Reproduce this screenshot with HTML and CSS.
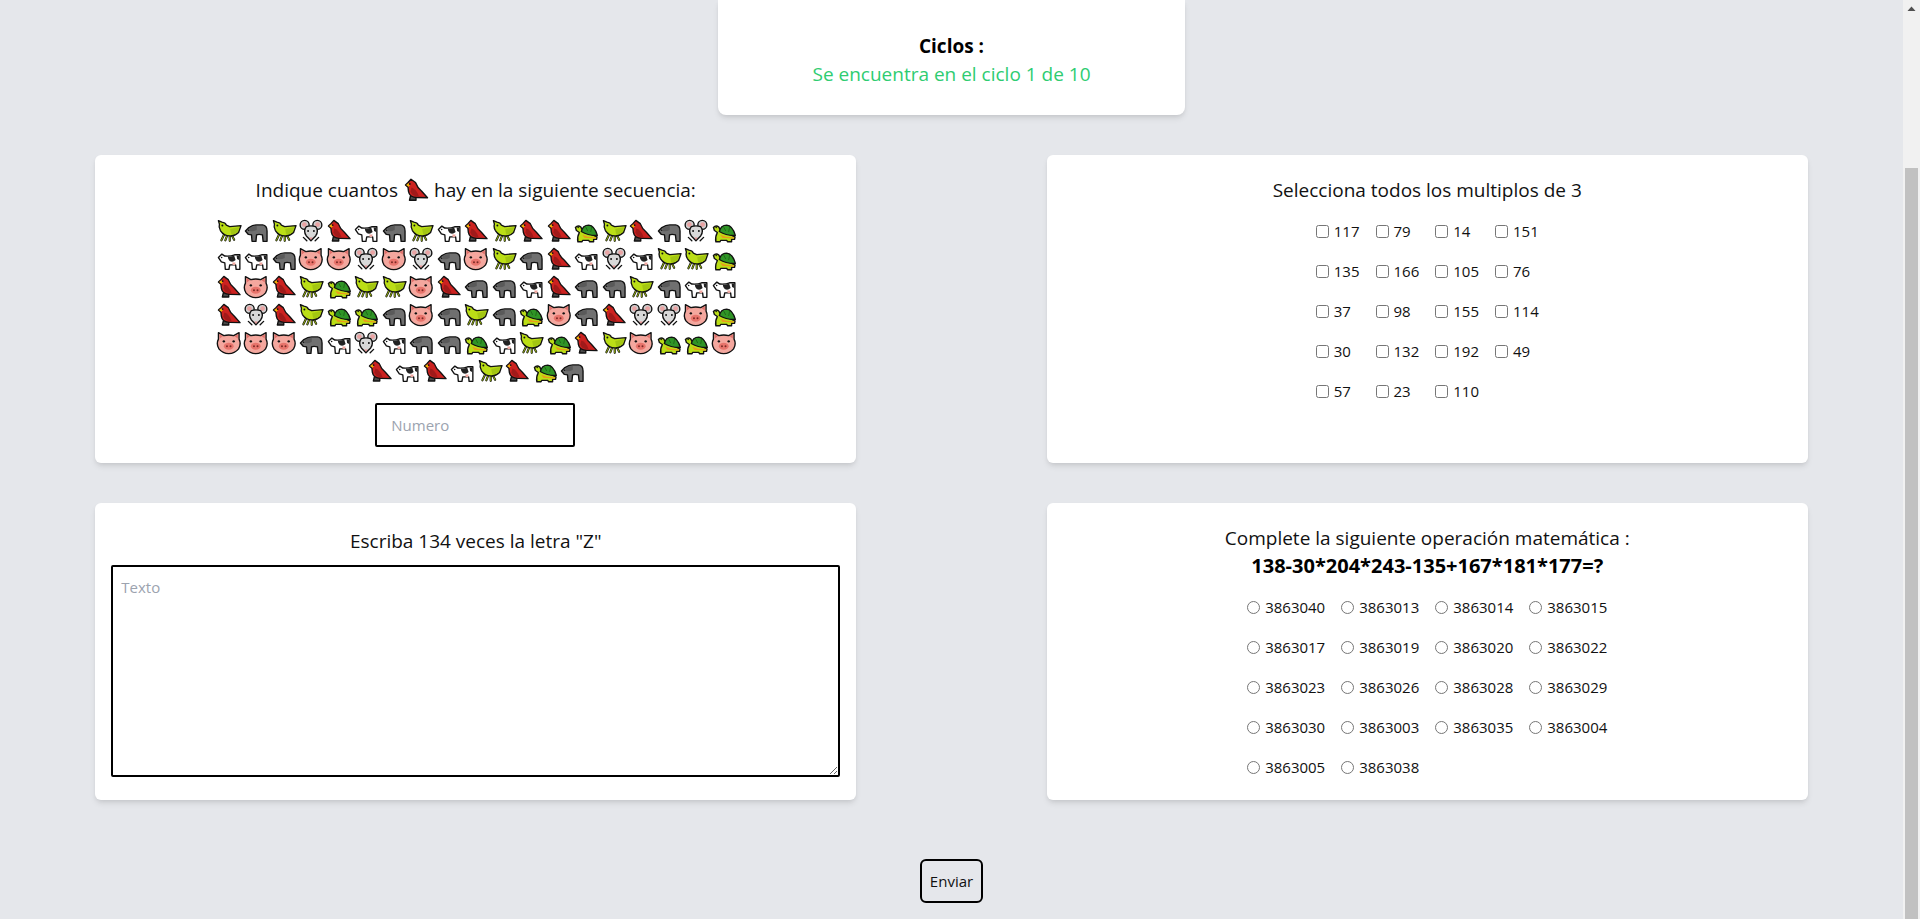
FILE: index.html
```html
<!DOCTYPE html>
<html lang="es">
<head>
<meta charset="utf-8">
<title>Ciclos</title>
<link rel="stylesheet" href="styles.css">
</head>
<body>
<svg class="defs" xmlns="http://www.w3.org/2000/svg">
  <symbol id="g" viewBox="0 0 28 28">
    <path class="leg" d="M10 16L6.500 23.500M13 17L10.500 23.500M15 17L15 24M16.500 17L19.500 23"/>
    <path class="leg-in" d="M10 16L6.500 23.500M13 17L10.500 23.500M15 17L15 24M16.500 17L19.500 23"/>
    <path class="ln" fill="#bbde16" d="M3.500 3.500L7 5Q10.500 5.500 11.500 8L15 9.500L26.500 8.500L24 15.500Q20 19.500 15 19Q9 19 5.500 13.500Q3.500 10 4.500 7Z"/>
    <path fill="#a3c612" d="M15.500 12L25 10L23 15Q19.500 18 16.500 17.500Z"/>
    <circle cx="7.500" cy="8.500" r="1" fill="#111"/>
  </symbol>
  <symbol id="b" viewBox="0 0 28 28">
    <path class="ln" fill="#707070" d="M3.500 14L7 10.500Q11 7.800 15 7.800L21 7.800Q25.500 8.500 25.500 14L25.500 24.500L21.500 24.500L20.800 18Q17 17 14.800 18L14.200 24.500L10.200 24.500L9.700 18L6.500 17.500Z"/>
    <path fill="#5a5a5a" d="M8 11Q11 9 15 9L15 13Q11 15 8 14Z"/>
    <circle cx="6.800" cy="13.300" r=".8" fill="#111"/>
  </symbol>
  <symbol id="m" viewBox="0 0 28 28">
    <circle class="ln" cx="7.800" cy="7.800" r="4.600" fill="#cfcfcf"/>
    <circle class="ln" cx="20.700" cy="7.800" r="4.600" fill="#cfcfcf"/>
    <circle cx="7.500" cy="7.500" r="2.400" fill="#e9a3a3"/>
    <circle cx="21" cy="7.500" r="2.400" fill="#e9a3a3"/>
    <path class="ln" d="M6.500 20.500L10 24M22 20.500L18.500 24"/>
    <path class="ln" fill="#d8d8d8" d="M9.500 9.500Q14.200 8 19 9.500Q22.500 14 19 19L14.200 24L9.500 19Q6 14 9.500 9.500Z"/>
    <circle cx="11.300" cy="14" r="1" fill="#111"/>
    <circle cx="17.200" cy="14" r="1" fill="#111"/>
    <path fill="#e88f8f" d="M12.500 20.500H16L14.200 22.800Z"/>
  </symbol>
  <symbol id="c" viewBox="0 0 28 28">
    <path class="ln" fill="#4a4a4a" d="M8.500 20H14V24.200H7.500Z"/>
    <path class="ln" fill="#cc2220" d="M9 3.200L13.500 6.500Q15.500 12 19.500 15L25.500 21.800L15 21.500Q7.500 21.500 6.500 15.500L6 11.200L3.500 9L6 6.500Z"/>
    <path fill="#a01a1a" d="M9.500 11.500Q14.500 13 17 20.500Q10.500 20.800 8.500 15.500Z"/>
    <path fill="#f2b606" d="M4.200 9L6.500 7L8 9L6.800 10.800Z"/>
    <circle cx="7.800" cy="8" r=".9" fill="#111"/>
  </symbol>
  <symbol id="w" viewBox="0 0 28 28">
    <path class="ln" fill="#fff" d="M3.500 12.500L7 9L10 11Q16 11.500 20 9.700L25.300 9.700L25.300 24.500L21.500 24.500L21 20L15 20L14.200 24.500L10.500 24.500L10 18L6.500 17Z"/>
    <path fill="#222" d="M13 11.500Q17 12 19.500 10.500L21 15Q18 18 15 16Q13 14 13 11.500ZM22 10.500L24.500 10.500L24.500 15L22.500 14Z"/>
    <path fill="#f0a8a0" d="M17.500 17.500H21L20.500 20H18Z"/>
    <circle cx="6.800" cy="12.500" r=".8" fill="#111"/>
  </symbol>
  <symbol id="p" viewBox="0 0 28 28">
    <path class="ln" fill="#f4a79e" d="M3.500 3.500L9 6.500Q14 5.300 19 6.500L24.500 3.500L24.500 10Q27 15 24 20Q20 24.800 14 24.800Q8 24.800 4 20Q1 15 3.500 10Z"/>
    <path fill="#e0706a" d="M4.800 5.200L8 7L4.800 9.300ZM23.200 5.200L20 7L23.200 9.300Z"/>
    <ellipse cx="14" cy="17.300" rx="5" ry="3.500" fill="#e8746c"/>
    <circle cx="12.200" cy="17.300" r="1" fill="#7a2a25"/>
    <circle cx="15.800" cy="17.300" r="1" fill="#7a2a25"/>
    <circle cx="9" cy="12.300" r="1.200" fill="#111"/>
    <circle cx="19" cy="12.300" r="1.200" fill="#111"/>
  </symbol>
  <symbol id="t" viewBox="0 0 28 28">
    <path class="ln" fill="#bbde16" d="M3.500 10.500Q6 7.500 9 10L10.500 13L25.500 20L25 22.500L22 22.500L22 25L18 25L17 23.500L11 23.500L10 25L6 25Q5 20 7.500 15.500L4.500 13.500Z"/>
    <path class="ln" fill="#2f9426" d="M9.500 14.500Q11 8 17 8Q23 8.500 25.800 18.500Q17 19 9.500 14.500Z"/>
    <path fill="#eb9a1c" d="M10.500 17.800Q17 20.800 24.500 20.300L24 21.700L12.500 20.800Z"/>
    <path d="M14 10L16 14M20 10L19 15" stroke="#1b5f16" stroke-width=".8" fill="none"/>
    <circle cx="6.300" cy="10.500" r=".8" fill="#111"/>
  </symbol>
</svg>

<div class="page">
  <section class="cycle-card">
    <p class="cycle-title">Ciclos :</p>
    <p class="cycle-status">Se encuentra en el ciclo 1 de 10</p>
  </section>

  <main class="tasks">
    <section class="card">
      <h2 class="task-title">Indique cuantos <svg class="emoji-inline"><use href="#c"/></svg> hay en la siguiente secuencia:</h2>
      <div class="emoji-grid">
        <svg class="emoji"><use href="#g"/></svg><svg class="emoji"><use href="#b"/></svg><svg class="emoji"><use href="#g"/></svg><svg class="emoji"><use href="#m"/></svg><svg class="emoji"><use href="#c"/></svg><svg class="emoji"><use href="#w"/></svg><svg class="emoji"><use href="#b"/></svg><svg class="emoji"><use href="#g"/></svg><svg class="emoji"><use href="#w"/></svg><svg class="emoji"><use href="#c"/></svg><svg class="emoji"><use href="#g"/></svg><svg class="emoji"><use href="#c"/></svg><svg class="emoji"><use href="#c"/></svg><svg class="emoji"><use href="#t"/></svg><svg class="emoji"><use href="#g"/></svg><svg class="emoji"><use href="#c"/></svg><svg class="emoji"><use href="#b"/></svg><svg class="emoji"><use href="#m"/></svg><svg class="emoji"><use href="#t"/></svg>
        <svg class="emoji"><use href="#w"/></svg><svg class="emoji"><use href="#w"/></svg><svg class="emoji"><use href="#b"/></svg><svg class="emoji"><use href="#p"/></svg><svg class="emoji"><use href="#p"/></svg><svg class="emoji"><use href="#m"/></svg><svg class="emoji"><use href="#p"/></svg><svg class="emoji"><use href="#m"/></svg><svg class="emoji"><use href="#b"/></svg><svg class="emoji"><use href="#p"/></svg><svg class="emoji"><use href="#g"/></svg><svg class="emoji"><use href="#b"/></svg><svg class="emoji"><use href="#c"/></svg><svg class="emoji"><use href="#w"/></svg><svg class="emoji"><use href="#m"/></svg><svg class="emoji"><use href="#w"/></svg><svg class="emoji"><use href="#g"/></svg><svg class="emoji"><use href="#g"/></svg><svg class="emoji"><use href="#t"/></svg>
        <svg class="emoji"><use href="#c"/></svg><svg class="emoji"><use href="#p"/></svg><svg class="emoji"><use href="#c"/></svg><svg class="emoji"><use href="#g"/></svg><svg class="emoji"><use href="#t"/></svg><svg class="emoji"><use href="#g"/></svg><svg class="emoji"><use href="#g"/></svg><svg class="emoji"><use href="#p"/></svg><svg class="emoji"><use href="#c"/></svg><svg class="emoji"><use href="#b"/></svg><svg class="emoji"><use href="#b"/></svg><svg class="emoji"><use href="#w"/></svg><svg class="emoji"><use href="#c"/></svg><svg class="emoji"><use href="#b"/></svg><svg class="emoji"><use href="#b"/></svg><svg class="emoji"><use href="#g"/></svg><svg class="emoji"><use href="#b"/></svg><svg class="emoji"><use href="#w"/></svg><svg class="emoji"><use href="#w"/></svg>
        <svg class="emoji"><use href="#c"/></svg><svg class="emoji"><use href="#m"/></svg><svg class="emoji"><use href="#c"/></svg><svg class="emoji"><use href="#g"/></svg><svg class="emoji"><use href="#t"/></svg><svg class="emoji"><use href="#t"/></svg><svg class="emoji"><use href="#b"/></svg><svg class="emoji"><use href="#p"/></svg><svg class="emoji"><use href="#b"/></svg><svg class="emoji"><use href="#g"/></svg><svg class="emoji"><use href="#b"/></svg><svg class="emoji"><use href="#t"/></svg><svg class="emoji"><use href="#p"/></svg><svg class="emoji"><use href="#b"/></svg><svg class="emoji"><use href="#c"/></svg><svg class="emoji"><use href="#m"/></svg><svg class="emoji"><use href="#m"/></svg><svg class="emoji"><use href="#p"/></svg><svg class="emoji"><use href="#t"/></svg>
        <svg class="emoji"><use href="#p"/></svg><svg class="emoji"><use href="#p"/></svg><svg class="emoji"><use href="#p"/></svg><svg class="emoji"><use href="#b"/></svg><svg class="emoji"><use href="#w"/></svg><svg class="emoji"><use href="#m"/></svg><svg class="emoji"><use href="#w"/></svg><svg class="emoji"><use href="#b"/></svg><svg class="emoji"><use href="#b"/></svg><svg class="emoji"><use href="#t"/></svg><svg class="emoji"><use href="#w"/></svg><svg class="emoji"><use href="#g"/></svg><svg class="emoji"><use href="#t"/></svg><svg class="emoji"><use href="#c"/></svg><svg class="emoji"><use href="#g"/></svg><svg class="emoji"><use href="#p"/></svg><svg class="emoji"><use href="#t"/></svg><svg class="emoji"><use href="#t"/></svg><svg class="emoji"><use href="#p"/></svg>
        <svg class="emoji"><use href="#c"/></svg><svg class="emoji"><use href="#w"/></svg><svg class="emoji"><use href="#c"/></svg><svg class="emoji"><use href="#w"/></svg><svg class="emoji"><use href="#g"/></svg><svg class="emoji"><use href="#c"/></svg><svg class="emoji"><use href="#t"/></svg><svg class="emoji"><use href="#b"/></svg>
      </div>
      <input class="number-input" type="text" placeholder="Numero">
    </section>

    <section class="card">
      <h2 class="task-title">Selecciona todos los multiplos de 3</h2>
      <div class="options options-check">
        <label class="option"><input type="checkbox">117</label>
        <label class="option"><input type="checkbox">79</label>
        <label class="option"><input type="checkbox">14</label>
        <label class="option"><input type="checkbox">151</label>
        <label class="option"><input type="checkbox">135</label>
        <label class="option"><input type="checkbox">166</label>
        <label class="option"><input type="checkbox">105</label>
        <label class="option"><input type="checkbox">76</label>
        <label class="option"><input type="checkbox">37</label>
        <label class="option"><input type="checkbox">98</label>
        <label class="option"><input type="checkbox">155</label>
        <label class="option"><input type="checkbox">114</label>
        <label class="option"><input type="checkbox">30</label>
        <label class="option"><input type="checkbox">132</label>
        <label class="option"><input type="checkbox">192</label>
        <label class="option"><input type="checkbox">49</label>
        <label class="option"><input type="checkbox">57</label>
        <label class="option"><input type="checkbox">23</label>
        <label class="option"><input type="checkbox">110</label>
      </div>
    </section>

    <section class="card">
      <h2 class="task-title task-title-low">Escriba 134 veces la letra "Z"</h2>
      <textarea class="text-input" placeholder="Texto"></textarea>
    </section>

    <section class="card">
      <h2 class="task-title">Complete la siguiente operación matemática :</h2>
      <p class="formula">138-30*204*243-135+167*181*177=?</p>
      <div class="options">
        <label class="option"><input type="radio" name="r">3863040</label>
        <label class="option"><input type="radio" name="r">3863013</label>
        <label class="option"><input type="radio" name="r">3863014</label>
        <label class="option"><input type="radio" name="r">3863015</label>
        <label class="option"><input type="radio" name="r">3863017</label>
        <label class="option"><input type="radio" name="r">3863019</label>
        <label class="option"><input type="radio" name="r">3863020</label>
        <label class="option"><input type="radio" name="r">3863022</label>
        <label class="option"><input type="radio" name="r">3863023</label>
        <label class="option"><input type="radio" name="r">3863026</label>
        <label class="option"><input type="radio" name="r">3863028</label>
        <label class="option"><input type="radio" name="r">3863029</label>
        <label class="option"><input type="radio" name="r">3863030</label>
        <label class="option"><input type="radio" name="r">3863003</label>
        <label class="option"><input type="radio" name="r">3863035</label>
        <label class="option"><input type="radio" name="r">3863004</label>
        <label class="option"><input type="radio" name="r">3863005</label>
        <label class="option"><input type="radio" name="r">3863038</label>
      </div>
    </section>
  </main>

  <div class="actions"><button class="submit" type="button">Enviar</button></div>
</div>

<aside class="scrollbar">
  <svg class="scroll-arrow" viewBox="0 0 17 17"><path d="M8.500 6.500L12.500 11H4.500Z"/></svg>
  <div class="scroll-thumb"></div>
</aside>
</body>
</html>
```

FILE: styles.css
```css
* { box-sizing: border-box; }

html, body { height: 100%; margin: 0; }

body {
  display: flex;
  overflow: hidden;
  background: #e5e7eb;
  color: #111;
  font-family: "Open Sans", "Noto Sans", sans-serif;
  font-size: 15px;
  line-height: 24px;
}

.defs { display: none; }
.ln { stroke: #111; stroke-width: 1.4; stroke-linejoin: round; stroke-linecap: round; }
.leg { stroke: #111; stroke-width: 2.2; fill: none; stroke-linecap: round; }
.leg-in { stroke: #a9c90f; stroke-width: .9; fill: none; stroke-linecap: round; }

.page { flex: 1; min-width: 0; display: flex; flex-direction: column; }

.cycle-card {
  align-self: center;
  width: 467px;
  height: 115px;
  padding-top: 32px;
  background: #fff;
  border-radius: 0 0 8px 8px;
  box-shadow: 0 4px 6px -1px rgba(0,0,0,.1), 0 2px 4px -1px rgba(0,0,0,.06);
  text-align: center;
  font-size: 19px;
  line-height: 28px;
}
.cycle-title { margin: 0; font-weight: 700; color: #000; }
.cycle-status { margin: 0; color: #2ecc71; }

.tasks {
  display: grid;
  grid-template-columns: 761px 761px;
  grid-template-rows: 308px 297px;
  justify-content: space-around;
  row-gap: 40px;
  margin-top: 40px;
}

.card {
  display: flex;
  flex-direction: column;
  align-items: center;
  padding: 21px 16px 16px;
  background: #fff;
  border-radius: 6px;
  box-shadow: 0 4px 6px -1px rgba(0,0,0,.1), 0 2px 4px -1px rgba(0,0,0,.06);
}

.task-title {
  display: flex;
  align-items: center;
  justify-content: center;
  gap: 4px;
  margin: 0;
  font-size: 19px;
  font-weight: 400;
  line-height: 28px;
}
.task-title-low { margin-top: 3px; }

.emoji-inline { width: 28px; height: 28px; }

.emoji-grid {
  display: flex;
  flex-wrap: wrap;
  justify-content: center;
  width: 530px;
  margin-top: 13px;
}
.emoji { display: block; width: 27.5px; height: 28px; }

.number-input {
  width: 200px;
  height: 44px;
  margin-top: 18px;
  margin-right: 1px;
  padding: 0 14px;
  border: 2px solid #000;
  border-radius: 2px;
  background: #fff;
  font: inherit;
}
.number-input::placeholder, .text-input::placeholder { color: #9ca3af; opacity: 1; }

.text-input {
  display: block;
  width: 729px;
  height: 212px;
  margin-top: 10px;
  padding: 8px;
  border: 2px solid #000;
  border-radius: 2px;
  background: #fff;
  font: inherit;
}

.formula {
  margin: 0;
  font-size: 20px;
  font-weight: 700;
  line-height: 28px;
  color: #000;
}

.options {
  display: grid;
  grid-template-columns: repeat(4, max-content);
  column-gap: 16px;
  row-gap: 16px;
  margin-top: 15px;
}
.options-check { margin-top: 15px; }

.option { display: flex; align-items: center; gap: 5px; height: 24px; }
.option input { width: 13px; height: 13px; margin: 0; }

.actions { display: flex; justify-content: center; margin-top: 59px; }

.submit {
  width: 63px;
  height: 44px;
  padding: 0;
  border: 2px solid #000;
  border-radius: 6px;
  background: transparent;
  color: #111;
  font: inherit;
}

.scrollbar {
  flex: none;
  display: flex;
  flex-direction: column;
  align-items: center;
  width: 17px;
  background: #f1f1f1;
}
.scroll-arrow { display: block; width: 17px; height: 17px; fill: #505050; }
.scroll-thumb { flex: 1; width: 13px; margin-top: 151px; background: #c1c1c1; }
```
